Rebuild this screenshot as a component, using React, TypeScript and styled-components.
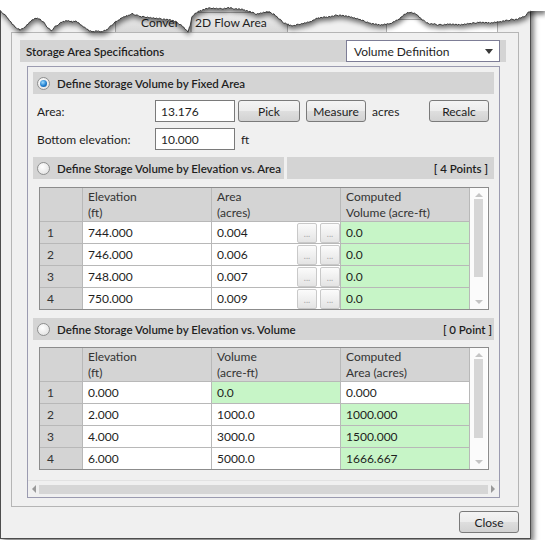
import React from "react";
import styled, { createGlobalStyle } from "styled-components";

const FONT = `Lato, "Open Sans", "Noto Sans", sans-serif`;
const BAR = "#d4d4d4";
const GREEN = "#c7f5c7";

const GlobalStyle = createGlobalStyle`
  html, body {
    margin: 0;
    padding: 0;
    background: #ffffff;
    overflow: hidden;
  }
  body {
    font-family: ${FONT};
    font-size: 12px;
    color: #1e1e1e;
  }
`;

const Page = styled.div`
  position: relative;
  width: 545px;
  height: 540px;
  overflow: hidden;
`;

const Window = styled.div`
  box-sizing: border-box;
  width: 531px;
  height: 539px;
  background: #f0f0f0;
  border: 1px solid #4d4d4d;
  border-top: none;
  box-shadow: 3px 3px 5px rgba(0, 0, 0, 0.5);
  padding: 0 11px 0 10px;
  display: flex;
  flex-direction: column;
`;

const TabStrip = styled.div`
  height: 32px;
  display: flex;
  align-items: flex-end;
  padding-left: 104px;
`;

const Tab = styled.div<{ $width: number; $pad: number }>`
  box-sizing: border-box;
  width: ${(p) => p.$width}px;
  height: 20px;
  padding-left: ${(p) => p.$pad}px;
  border: 1px solid #a5a5a5;
  border-bottom: none;
  background: linear-gradient(#ececec, #d8d8d8);
  font-size: 12px;
  line-height: 19px;
  color: #1e1e1e;
  white-space: nowrap;
  overflow: hidden;
`;

const TopField = styled.div`
  width: 110px;
  height: 12px;
  margin-left: auto;
  margin-right: 21px;
  background: #fff;
  border: 1px solid #b0b0b0;
  border-bottom: none;
`;

const Frame = styled.div`
  box-sizing: border-box;
  height: 475px;
  border: 1px solid #b5b5b5;
  padding: 7px 12px 0 8px;
  display: flex;
  flex-direction: column;
`;

const HeaderBar = styled.div`
  height: 22px;
  background: ${BAR};
  display: flex;
  align-items: center;
  justify-content: space-between;
  padding-left: 6px;
`;

const HeaderTitle = styled.span`
  font-weight: 600;
  font-size: 11.5px;
  color: #1e1e1e;
`;

const Dropdown = styled.div`
  box-sizing: border-box;
  width: 154px;
  height: 22px;
  margin-right: 6px;
  background: #fff;
  border: 1px solid #7d7d96;
  display: flex;
  align-items: center;
  justify-content: space-between;
  padding: 0 6px 0 7px;
  font-size: 12px;
`;

const Caret = styled.span`
  width: 0;
  height: 0;
  border-left: 4px solid transparent;
  border-right: 4px solid transparent;
  border-top: 5px solid #3a3a3a;
`;

const InnerBox = styled.div`
  box-sizing: border-box;
  height: 432px;
  margin: 4px 6px 0 7px;
  border: 1px solid #9b9bb0;
  display: flex;
  flex-direction: column;
`;

const Content = styled.div`
  flex: 1;
  padding: 5px 5px 0;
  display: flex;
  flex-direction: column;
`;

const SectionHeader = styled.div<{ $top: number }>`
  height: 22px;
  margin-top: ${(p) => p.$top}px;
  display: flex;
  gap: 3px;
`;

const SectionPart = styled.div<{ $grow?: boolean; $end?: boolean; $width?: number }>`
  flex: ${(p) => (p.$grow ? "1" : "0 0 auto")};
  ${(p) => (p.$width ? `width: ${p.$width}px; box-sizing: border-box;` : "")}
  background: ${BAR};
  display: flex;
  align-items: center;
  justify-content: ${(p) => (p.$end ? "flex-end" : "flex-start")};
  padding: ${(p) => (p.$end ? "0 6px 0 0" : "0 0 0 4px")};
  font-size: 12px;
  white-space: nowrap;
`;

const Radio = styled.span<{ $checked?: boolean }>`
  box-sizing: border-box;
  flex: none;
  width: 13px;
  height: 13px;
  margin-right: 7px;
  border-radius: 50%;
  border: 1px solid #8e8f8f;
  background: radial-gradient(circle at 40% 35%, #ffffff, #dcdcdc);
  display: flex;
  align-items: center;
  justify-content: center;
  &::after {
    content: "";
    width: 7px;
    height: 7px;
    border-radius: 50%;
    display: ${(p) => (p.$checked ? "block" : "none")};
    background: radial-gradient(circle at 40% 35%, #9fdcff, #1f7fd0 55%, #0b4a8c);
  }
`;

const SectionTitle = styled.span`
  font-weight: 600;
  font-size: 11.5px;
  color: #1e1e1e;
`;

const FormRow = styled.div`
  height: 22px;
  margin-top: 6px;
  display: flex;
  align-items: center;
  padding: 0 5px 0 4px;
`;

const FieldLabel = styled.span`
  width: 118px;
  font-size: 12px;
`;

const TextBox = styled.div`
  box-sizing: border-box;
  width: 80px;
  height: 22px;
  background: #fff;
  border: 1px solid #7a7a7a;
  padding-left: 5px;
  display: flex;
  align-items: center;
  font-size: 12px;
`;

const Button = styled.button<{ $width: number; $left: number }>`
  box-sizing: border-box;
  width: ${(p) => p.$width}px;
  height: 22px;
  margin-left: ${(p) => p.$left}px;
  padding: 0;
  border: 1px solid #7a7a7a;
  border-radius: 3px;
  background: linear-gradient(#f4f4f4 0%, #ececec 48%, #dedede 52%, #d2d2d2 100%);
  font-family: ${FONT};
  font-size: 12px;
  color: #1e1e1e;
`;

const EndButton = styled(Button)`
  margin-left: auto;
`;

const Unit = styled.span<{ $left: number }>`
  margin-left: ${(p) => p.$left}px;
  font-size: 12px;
`;

const Table = styled.div<{ $top: number }>`
  margin: ${(p) => p.$top}px 5px 0 6px;
  border: 1px solid #8c8c8c;
  display: flex;
  background: #fff;
`;

const Grid = styled.div`
  display: grid;
  grid-template-columns: 42px 128px 128px 128px;
  grid-template-rows: 33px repeat(4, 21px);
  gap: 1px;
  background: #b8b8b8;
  border-right: 1px solid #b8b8b8;
`;

const HeadCell = styled.div`
  background: ${BAR};
  padding: 1px 5px 0;
  line-height: 16px;
  font-size: 12px;
  color: #333;
  white-space: nowrap;
`;

const RowHead = styled.div`
  background: ${BAR};
  padding-left: 7px;
  display: flex;
  align-items: center;
  font-size: 12px;
  color: #333;
`;

const Cell = styled.div<{ $green?: boolean }>`
  background: ${(p) => (p.$green ? GREEN : "#fff")};
  padding-left: 5px;
  display: flex;
  align-items: center;
  font-size: 12px;
  color: #1e1e1e;
`;

const CellText = styled.span`
  flex: 1;
`;

const Dots = styled.span`
  box-sizing: border-box;
  width: 20px;
  height: 20px;
  margin-left: 3px;
  border: 1px solid #c9c9c9;
  border-radius: 2px;
  background: linear-gradient(#fbfbfb, #e4e4e4);
  color: #a8a8a8;
  font-size: 9px;
  line-height: 20px;
  text-align: center;
`;

const VScroll = styled.div`
  width: 17px;
  display: flex;
  flex-direction: column;
  align-items: center;
  background: #fbfbfb;
`;

const Arrow = styled.span<{ $down?: boolean }>`
  width: 0;
  height: 0;
  margin: ${(p) => (p.$down ? "auto 0 5px" : "5px 0 0")};
  border-left: 4px solid transparent;
  border-right: 4px solid transparent;
  ${(p) => (p.$down ? "border-top" : "border-bottom")}: 4px solid #c4c4c4;
`;

const Thumb = styled.span<{ $top: number; $height: number }>`
  width: 9px;
  height: ${(p) => p.$height}px;
  margin-top: ${(p) => p.$top}px;
  background: #d6d6d6;
`;

const HScroll = styled.div`
  height: 16px;
  border-top: 1px solid #e2e2e2;
  display: flex;
  align-items: center;
  padding: 0 4px;
  gap: 3px;
`;

const HArrow = styled.span<{ $right?: boolean }>`
  width: 0;
  height: 0;
  border-top: 4px solid transparent;
  border-bottom: 4px solid transparent;
  ${(p) => (p.$right ? "border-left" : "border-right")}: 4px solid #9a9a9a;
`;

const HTrack = styled.span`
  flex: 1;
  height: 9px;
  background: #d6d6d6;
`;

const Footer = styled.div`
  display: flex;
  justify-content: flex-end;
  padding-top: 4px;
`;

const TearLayer = styled.svg`
  position: absolute;
  left: 0;
  top: 0;
  pointer-events: none;
`;

const control: [number, number][] = [
  [0, 11], [4, 14], [8, 19], [12, 24], [16, 28], [20, 30], [24, 28], [28, 24],
  [32, 20], [36, 18], [40, 19], [44, 23], [48, 28], [51, 31], [55, 27], [59, 24],
  [63, 22], [67, 21], [72, 22], [76, 21], [80, 24], [85, 28], [89, 31], [93, 32],
  [97, 31], [101, 32], [106, 30], [110, 27], [114, 23], [118, 21], [122, 18],
  [127, 16], [132, 14], [136, 15], [140, 17], [146, 17], [152, 18], [158, 19],
  [164, 19], [170, 20], [176, 22], [181, 25], [185, 29], [188, 32], [190, 26],
  [192, 17], [195, 14], [200, 11], [206, 9], [212, 8], [220, 9], [228, 8],
  [236, 9], [244, 10], [250, 12], [256, 14], [262, 13], [268, 12], [274, 14],
  [279, 19], [284, 23], [289, 25], [294, 26], [300, 24], [310, 22], [318, 18],
  [326, 17], [334, 16], [340, 15], [350, 17], [360, 20], [370, 23], [380, 25],
  [390, 24], [398, 20], [404, 15], [410, 12], [416, 14], [422, 20], [430, 24],
  [440, 25], [450, 24], [460, 25], [470, 24], [480, 22], [490, 23], [500, 22],
  [510, 20], [518, 19], [524, 17], [528, 13], [531, 11],
];

function tearPath() {
  const pts: string[] = [];
  for (let i = 0; i < control.length - 1; i++) {
    const [x0, y0] = control[i];
    const [x1, y1] = control[i + 1];
    for (let x = x0; x < x1; x += 1.5) {
      const t = (x - x0) / (x1 - x0);
      const jitter = (((Math.round(x * 10) * 37) % 11) / 11 - 0.5) * 1.6;
      pts.push(`${x.toFixed(1)},${(y0 + (y1 - y0) * t + jitter).toFixed(1)}`);
    }
  }
  pts.push("531,11");
  return pts;
}

const Tear = () => {
  const line = tearPath();
  const area = `M0,0 L545,0 L545,11 L${line.slice().reverse().join(" L")} Z`;
  return (
    <TearLayer width={545} height={50} viewBox="0 0 545 50">
      <defs>
        <filter id="tearShadow" x="-5%" y="-50%" width="110%" height="200%">
          <feGaussianBlur stdDeviation="2.6" />
        </filter>
      </defs>
      <path d={area} fill="#000" opacity={0.55} transform="translate(1 3.5)" filter="url(#tearShadow)" />
      <path d={area} fill="#fff" />
      <polyline points={line.join(" ")} fill="none" stroke="#3c3c3c" strokeWidth={1} />
    </TearLayer>
  );
};

type Row = { value: string; green?: boolean }[];

const areaRows: Row[] = [
  [{ value: "744.000" }, { value: "0.004" }, { value: "0.0", green: true }],
  [{ value: "746.000" }, { value: "0.006" }, { value: "0.0", green: true }],
  [{ value: "748.000" }, { value: "0.007" }, { value: "0.0", green: true }],
  [{ value: "750.000" }, { value: "0.009" }, { value: "0.0", green: true }],
];

const volumeRows: Row[] = [
  [{ value: "0.000" }, { value: "0.0", green: true }, { value: "0.000" }],
  [{ value: "2.000" }, { value: "1000.0" }, { value: "1000.000", green: true }],
  [{ value: "4.000" }, { value: "3000.0" }, { value: "1500.000", green: true }],
  [{ value: "6.000" }, { value: "5000.0" }, { value: "1666.667", green: true }],
];

const DataTable = ({
  top,
  heads,
  rows,
  dots,
  thumbTop,
  thumbHeight,
}: {
  top: number;
  heads: [string, string][];
  rows: Row[];
  dots?: boolean;
  thumbTop: number;
  thumbHeight: number;
}) => (
  <Table $top={top}>
    <Grid>
      <HeadCell />
      {heads.map(([a, b]) => (
        <HeadCell key={a + b}>
          {a}
          <br />
          {b}
        </HeadCell>
      ))}
      {rows.map((row, i) => (
        <React.Fragment key={i}>
          <RowHead>{i + 1}</RowHead>
          {row.map((c, j) => (
            <Cell key={j} $green={c.green}>
              <CellText>{c.value}</CellText>
              {dots && j === 1 && (
                <>
                  <Dots>...</Dots>
                  <Dots>...</Dots>
                </>
              )}
            </Cell>
          ))}
        </React.Fragment>
      ))}
    </Grid>
    <VScroll>
      <Arrow />
      <Thumb $top={thumbTop} $height={thumbHeight} />
      <Arrow $down />
    </VScroll>
  </Table>
);

export default function App() {
  return (
    <Page>
      <GlobalStyle />
      <Window>
        <TabStrip>
          <Tab $width={76} $pad={25}>Conver</Tab>
          <Tab $width={97} $pad={3}>2D Flow Area</Tab>
          <TopField />
        </TabStrip>
        <Frame>
          <HeaderBar>
            <HeaderTitle>Storage Area Specifications</HeaderTitle>
            <Dropdown>
              Volume Definition
              <Caret />
            </Dropdown>
          </HeaderBar>
          <InnerBox>
            <Content>
              <SectionHeader $top={0}>
                <SectionPart $grow>
                  <Radio $checked />
                  <SectionTitle>Define Storage Volume by Fixed Area</SectionTitle>
                </SectionPart>
              </SectionHeader>
              <FormRow>
                <FieldLabel>Area:</FieldLabel>
                <TextBox>13.176</TextBox>
                <Button $width={62} $left={3}>Pick</Button>
                <Button $width={60} $left={6}>Measure</Button>
                <Unit $left={6}>acres</Unit>
                <EndButton $width={60} $left={0}>Recalc</EndButton>
              </FormRow>
              <FormRow>
                <FieldLabel>Bottom elevation:</FieldLabel>
                <TextBox>10.000</TextBox>
                <Unit $left={6}>ft</Unit>
              </FormRow>
              <SectionHeader $top={7}>
                <SectionPart $width={251}>
                  <Radio />
                  <SectionTitle>Define Storage Volume by Elevation vs. Area</SectionTitle>
                </SectionPart>
                <SectionPart $grow $end>
                  <SectionTitle>[ 4 Points ]</SectionTitle>
                </SectionPart>
              </SectionHeader>
              <DataTable
                top={8}
                heads={[
                  ["Elevation", "(ft)"],
                  ["Area", "(acres)"],
                  ["Computed", "Volume (acre-ft)"],
                ]}
                rows={areaRows}
                dots
                thumbTop={2}
                thumbHeight={78}
              />
              <SectionHeader $top={8}>
                <SectionPart $grow>
                  <Radio />
                  <SectionTitle>Define Storage Volume by Elevation vs. Volume</SectionTitle>
                  <SectionPart $grow $end style={{ paddingRight: 2 }}>
                    <SectionTitle>[ 0 Point ]</SectionTitle>
                  </SectionPart>
                </SectionPart>
              </SectionHeader>
              <DataTable
                top={7}
                heads={[
                  ["Elevation", "(ft)"],
                  ["Volume", "(acre-ft)"],
                  ["Computed", "Area (acres)"],
                ]}
                rows={volumeRows}
                thumbTop={2}
                thumbHeight={79}
              />
            </Content>
            <HScroll>
              <HArrow />
              <HTrack />
              <HArrow $right />
            </HScroll>
          </InnerBox>
        </Frame>
        <Footer>
          <Button $width={60} $left={0}>Close</Button>
        </Footer>
      </Window>
      <Tear />
    </Page>
  );
}
